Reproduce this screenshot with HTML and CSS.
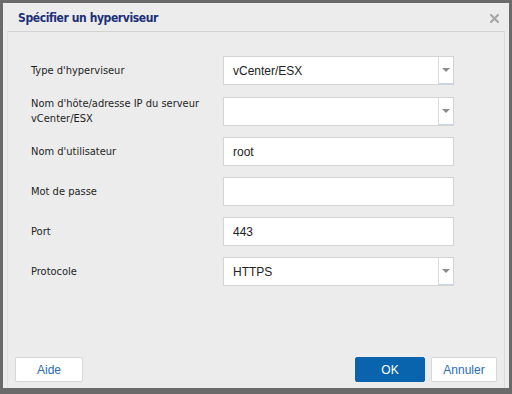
FILE: index.html
```html
<!DOCTYPE html>
<html lang="fr">
<head>
<meta charset="utf-8">
<title>Spécifier un hyperviseur</title>
<link rel="stylesheet" href="styles.css">
</head>
<body>
<div class="dialog">
  <div class="header">
    <span class="title">Spécifier un hyperviseur</span>
    <svg class="close" width="9" height="9" viewBox="0 0 9 9"><path d="M1 1 L8 8 M8 1 L1 8" stroke="#a6a6a6" stroke-width="2.2" stroke-linecap="square"/></svg>
  </div>
  <div class="body">
    <div class="form">
      <div class="label">Type d'hyperviseur</div>
      <div class="field select"><span class="value">vCenter/ESX</span><span class="arrow"></span></div>

      <div class="label two">Nom d'hôte/adresse IP du serveur<br>vCenter/ESX</div>
      <div class="field select"><span class="value"></span><span class="arrow"></span></div>

      <div class="label">Nom d'utilisateur</div>
      <div class="field"><span class="value">root</span></div>

      <div class="label">Mot de passe</div>
      <div class="field"><span class="value"></span></div>

      <div class="label">Port</div>
      <div class="field"><span class="value">443</span></div>

      <div class="label">Protocole</div>
      <div class="field select"><span class="value">HTTPS</span><span class="arrow"></span></div>
    </div>
    <div class="footer">
      <button class="btn">Aide</button>
      <div class="right">
        <button class="btn primary">OK</button>
        <button class="btn">Annuler</button>
      </div>
    </div>
  </div>
</div>
</body>
</html>
```

FILE: styles.css
```css
html, body {
  margin: 0;
  padding: 0;
}
body {
  background: #6a6a6a;
  width: 512px;
  height: 394px;
  overflow: hidden;
  padding-top: 3px;
  padding-left: 3px;
  box-sizing: border-box;
}
.dialog {
  width: 506px;
  height: 385px;
  background: #ececec;
  display: flex;
  flex-direction: column;
}
.header {
  height: 28px;
  display: flex;
  align-items: center;
  justify-content: space-between;
  padding: 0 10px 0 15px;
}
.title {
  font-family: "DejaVu Sans Condensed", "DejaVu Sans", sans-serif;
  font-weight: bold;
  font-size: 12px;
  letter-spacing: -0.4px;
  color: #1b2f78;
  margin-top: 1px;
}
.close {
  margin-top: 2px;
}
.body {
  flex: 1;
  margin: 0 4px 0 4px;
  border-top: 1px solid #d2d2d2;
  border-left: 1px solid #e2e2e2;
  border-right: 1px solid #dcdcdc;
  display: flex;
  flex-direction: column;
  justify-content: space-between;
}
.form {
  display: grid;
  grid-template-columns: 192px 231px;
  column-gap: 0;
  row-gap: 11px;
  padding: 24px 0 0 23px;
  align-items: center;
}
.label {
  font-family: "DejaVu Sans Condensed", "DejaVu Sans", sans-serif;
  font-size: 11px;
  color: #1e1e1e;
  line-height: 15px;
}
.field {
  height: 29px;
  box-sizing: border-box;
  background: #fff;
  border: 1px solid #d4d4d4;
  display: flex;
  align-items: center;
  font-family: "Liberation Sans", Arial, sans-serif;
  font-size: 12px;
  color: #222;
}
.value {
  flex: 1;
  padding-left: 9px;
}
.arrow {
  width: 15px;
  height: 27px;
  border-left: 1px solid #dcdcdc;
  border-bottom: 1px solid #c5d6ea;
  box-sizing: border-box;
  position: relative;
}
.arrow::after {
  content: "";
  position: absolute;
  left: 3px;
  top: 11px;
  border-left: 4px solid transparent;
  border-right: 4px solid transparent;
  border-top: 4px solid #8c8c8c;
}
.footer {
  display: flex;
  justify-content: space-between;
  align-items: center;
  padding: 0 7px 6px 7px;
}
.right {
  display: flex;
  gap: 6px;
}
.btn {
  height: 25px;
  width: 68px;
  background: #fff;
  border: 1px solid #d6d6d6;
  border-radius: 2px;
  font-family: "Liberation Sans", Arial, sans-serif;
  font-size: 12px;
  color: #2b6db5;
  padding: 0;
}
.btn.primary {
  width: 70px;
  background: #0a64ad;
  border-color: #0a64ad;
  color: #fff;
}
.right .btn:last-child {
  width: 66px;
}
```
